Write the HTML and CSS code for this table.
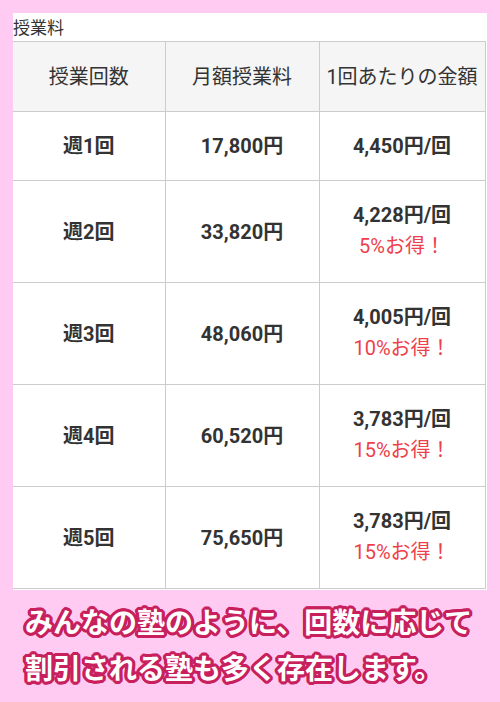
FILE: index.html
```html
<!DOCTYPE html>
<html lang="ja">
<head>
<meta charset="utf-8">
<link rel="stylesheet" href="styles.css">
</head>
<body>
<div class="panel">
  <div class="caption">授業料</div>
  <table class="fees">
    <colgroup><col class="c1"><col class="c2"><col class="c3"></colgroup>
    <thead>
      <tr><th>授業回数</th><th>月額授業料</th><th>1回あたりの金額</th></tr>
    </thead>
    <tbody>
      <tr><td>週1回</td><td>17,800円</td><td>4,450円/回</td></tr>
      <tr><td>週2回</td><td>33,820円</td><td>4,228円/回<span class="deal">5%お得！</span></td></tr>
      <tr><td>週3回</td><td>48,060円</td><td>4,005円/回<span class="deal">10%お得！</span></td></tr>
      <tr><td>週4回</td><td>60,520円</td><td>3,783円/回<span class="deal">15%お得！</span></td></tr>
      <tr><td>週5回</td><td>75,650円</td><td>3,783円/回<span class="deal">15%お得！</span></td></tr>
    </tbody>
  </table>
</div>
<p class="note">みんなの塾のように、回数に応じて<br>割引される塾も多く存在します。</p>
</body>
</html>
```

FILE: styles.css
```css
html, body { margin: 0; padding: 0; }
body {
  background: #ffcbf3;
  padding: 13px 13px 0 13px;
  font-family: Roboto, "Noto Sans CJK JP", sans-serif;
  color: #333;
}
.panel {
  background: #fff;
  width: 474px;
  padding-bottom: 1px;
}
.caption {
  font-family: "Noto Sans CJK JP", sans-serif;
  font-size: 17px;
  line-height: 28px;
  height: 28px;
  color: #333;
}
.fees {
  border-collapse: collapse;
  width: 472px;
  table-layout: fixed;
}
.c1 { width: 152px; }
.c2 { width: 154px; }
.c3 { width: 166px; }
.fees th, .fees td {
  border: 1px solid #cccccc;
  text-align: center;
  vertical-align: middle;
  padding: 19px 0;
  line-height: 30px;
}
.fees tr > :first-child { border-left: none; }
.fees th {
  background: #f5f5f5;
  font-weight: normal;
  font-size: 20px;
  padding: 20px 0 19px;
}
.fees td {
  font-weight: bold;
  font-size: 20px;
}
.deal {
  display: block;
  color: #ee3f4c;
  font-weight: normal;
  font-size: 20px;
  line-height: 33px;
}
.note {
  margin: 8px 0 0 12px;
  font-family: "Noto Sans CJK JP", sans-serif;
  font-weight: bold;
  font-size: 28px;
  line-height: 46px;
  color: #fff;
  text-shadow:
    2px 0 0 #c8205c, -2px 0 0 #c8205c, 0 2px 0 #c8205c, 0 -2px 0 #c8205c,
    2px 2px 0 #c8205c, -2px -2px 0 #c8205c, 2px -2px 0 #c8205c, -2px 2px 0 #c8205c,
    3px 0 0 #c8205c, -3px 0 0 #c8205c, 0 3px 0 #c8205c, 0 -3px 0 #c8205c,
    3px 1px 0 #c8205c, -3px 1px 0 #c8205c, 3px -1px 0 #c8205c, -3px -1px 0 #c8205c,
    1px 3px 0 #c8205c, 1px -3px 0 #c8205c, -1px 3px 0 #c8205c, -1px -3px 0 #c8205c;
}
```
